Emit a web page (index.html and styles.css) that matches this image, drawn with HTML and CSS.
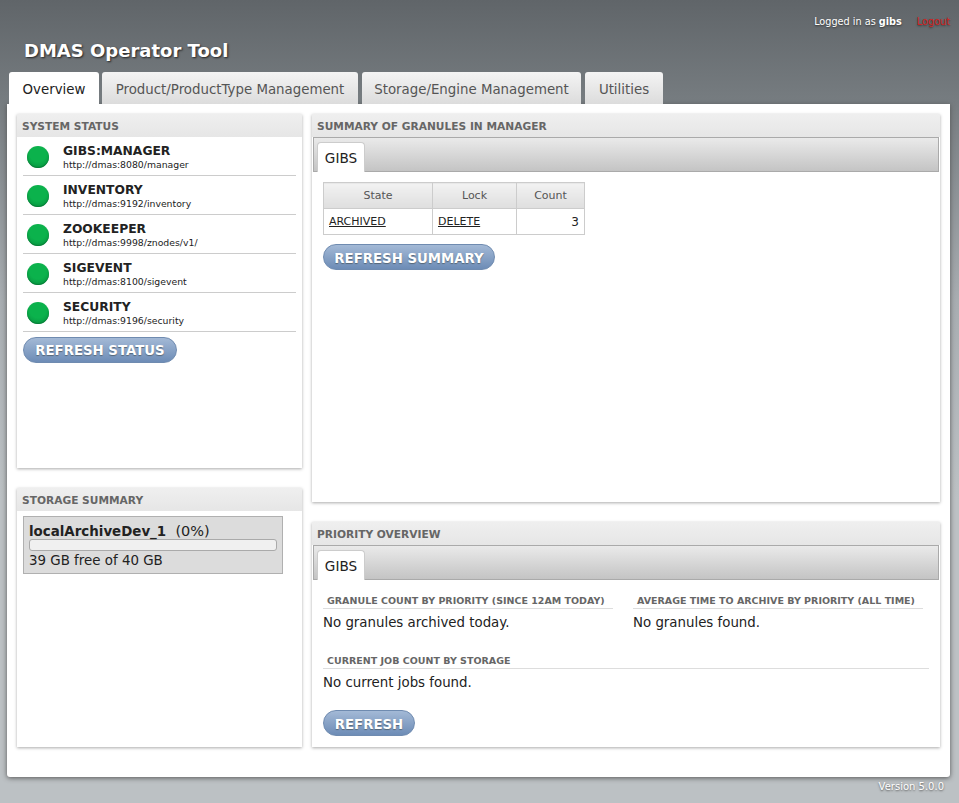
FILE: index.html
```html
<!DOCTYPE html>
<html lang="en">
  <head>
    <meta charset="UTF-8" />
    <title>DMAS Operator Tool</title>
    <link rel="stylesheet" href="styles.css">
  </head>
  <body>
    <div class="top">
      <div class="login">
        Logged in as <b>gibs</b>
        <a href="#" class="logout">Logout</a>
      </div>
      <h1>DMAS Operator Tool</h1>
    </div>

    <ul class="tabs">
      <li class="tab active">Overview</li>
      <li class="tab tab-product">Product/ProductType Management</li>
      <li class="tab tab-storage">Storage/Engine Management</li>
      <li class="tab tab-util">Utilities</li>
    </ul>

    <div class="content">
      <div class="col col-left">
        <div class="panel status-panel">
          <div class="panel-title">SYSTEM STATUS</div>
          <div class="panel-body">
            <div class="status-row">
              <span class="dot"></span>
              <div><div class="svc">GIBS:MANAGER</div><div class="url">http://dmas:8080/manager</div></div>
            </div>
            <div class="status-row">
              <span class="dot"></span>
              <div><div class="svc">INVENTORY</div><div class="url">http://dmas:9192/inventory</div></div>
            </div>
            <div class="status-row">
              <span class="dot"></span>
              <div><div class="svc">ZOOKEEPER</div><div class="url">http://dmas:9998/znodes/v1/</div></div>
            </div>
            <div class="status-row">
              <span class="dot"></span>
              <div><div class="svc">SIGEVENT</div><div class="url">http://dmas:8100/sigevent</div></div>
            </div>
            <div class="status-row">
              <span class="dot"></span>
              <div><div class="svc">SECURITY</div><div class="url">http://dmas:9196/security</div></div>
            </div>
            <button class="btn btn-status">REFRESH STATUS</button>
          </div>
        </div>

        <div class="panel storage-panel">
          <div class="panel-title">STORAGE SUMMARY</div>
          <div class="panel-body storage-body">
            <div class="storage">
              <div class="storage-name"><b>localArchiveDev_1</b> <span class="pct">(0%)</span></div>
              <div class="bar"></div>
              <div>39 GB free of 40 GB</div>
            </div>
          </div>
        </div>
      </div>

      <div class="col col-right">
        <div class="panel summary-panel">
          <div class="panel-title">SUMMARY OF GRANULES IN MANAGER</div>
          <div class="subtabs"><span class="subtab">GIBS</span></div>
          <div class="summary-body">
            <table>
              <tr><th class="c1">State</th><th class="c2">Lock</th><th class="c3">Count</th></tr>
              <tr><td><a href="#">ARCHIVED</a></td><td><a href="#">DELETE</a></td><td class="num">3</td></tr>
            </table>
            <button class="btn btn-summary">REFRESH SUMMARY</button>
          </div>
        </div>

        <div class="panel priority-panel">
          <div class="panel-title">PRIORITY OVERVIEW</div>
          <div class="subtabs"><span class="subtab">GIBS</span></div>
          <div class="priority-body">
            <div class="two">
              <div>
                <h3>GRANULE COUNT BY PRIORITY (SINCE 12AM TODAY)</h3>
                <p>No granules archived today.</p>
              </div>
              <div>
                <h3>AVERAGE TIME TO ARCHIVE BY PRIORITY (ALL TIME)</h3>
                <p>No granules found.</p>
              </div>
            </div>
            <h3 class="jobs">CURRENT JOB COUNT BY STORAGE</h3>
            <p>No current jobs found.</p>
            <button class="btn btn-refresh">REFRESH</button>
          </div>
        </div>
      </div>
    </div>

    <div class="version">Version 5.0.0</div>
  </body>
</html>
```

FILE: styles.css
```css
body {
  font-family: "DejaVu Sans", Verdana, sans-serif;
  background: linear-gradient(#606569 0, #767c80 100px, #a8adb1 300px, #bcc1c4 500px);
  margin: 0;
  padding: 0;
  height: 803px;
  overflow: hidden;
  color: #222;
}

.top {
  height: 72px;
  box-sizing: border-box;
  padding: 16px 9px 0 24px;
}

.login {
  text-align: right;
  font-size: 9.7px;
  line-height: 12px;
  color: #fff;
  text-shadow: 0 1px 2px #333;
}

.logout {
  color: #d42020;
  text-decoration: none;
  margin-left: 12px;
}

h1 {
  margin: 11px 0 0;
  font-size: 18px;
  line-height: 24px;
  color: #fff;
  text-shadow: 1px 1px 2px #222;
}

.tabs {
  display: flex;
  list-style: none;
  margin: 0 0 0 9px;
  padding: 0;
  height: 32px;
}

.tab {
  box-sizing: border-box;
  height: 32px;
  line-height: 35px;
  text-align: center;
  font-size: 13.35px;
  color: #555;
  background: linear-gradient(#f4f4f4, #dcdcdc);
  border-radius: 3px 3px 0 0;
  margin-right: 3px;
  width: 90px;
}

.tab.active {
  background: #fff;
  color: #222;
}

.tab-product { width: 256px; margin-right: 4px; }
.tab-storage { width: 219px; margin-right: 4px; }
.tab-util { width: 78px; }

.content {
  display: flex;
  gap: 10px;
  box-sizing: border-box;
  width: 943px;
  height: 673px;
  margin-left: 7px;
  padding: 10px 10px 30px;
  background: #fff;
  border-radius: 0 0 3px 3px;
  box-shadow: 0 1px 5px #555;
}

.col {
  display: flex;
  flex-direction: column;
  gap: 20px;
}

.col-left { width: 285px; }
.col-right { width: 628px; }

.panel {
  background: #fff;
  box-shadow: 0 1px 3px #aaa;
  display: flex;
  flex-direction: column;
}

.status-panel { height: 354px; }
.storage-panel { height: 259px; }
.summary-panel { height: 388px; }
.priority-panel { height: 225px; }

.panel-title {
  height: 23px;
  box-sizing: border-box;
  padding: 6px 5px 0;
  font-size: 10.65px;
  line-height: 14px;
  font-weight: bold;
  color: #666;
  background: linear-gradient(#efefef, #e6e6e6);
  flex: none;
}

.panel-body {
  padding: 0 6px;
}

.status-row {
  display: flex;
  align-items: center;
  height: 38px;
  border-bottom: 1px solid #ccc;
}

.dot {
  width: 22px;
  height: 22px;
  margin: 2px 14px 0 4px;
  border-radius: 50%;
  background: radial-gradient(circle at 50% 35%, #0bb24c 45%, #068a3c 100%);
  box-shadow: inset 0 -1px 1px #067a35;
  flex: none;
}

.svc {
  padding-top: 2px;
  font-size: 12.3px;
  line-height: 14px;
  font-weight: bold;
  color: #222;
}

.url {
  font-size: 9.3px;
  line-height: 13px;
  color: #222;
}

.btn {
  display: block;
  height: 26px;
  padding: 0;
  border: 1px solid #6f8bb0;
  border-radius: 13px;
  background: linear-gradient(#a3b9d6, #6d8cb6);
  color: #fff;
  font-family: inherit;
  font-size: 13.3px;
  font-weight: bold;
  text-shadow: 0 1px 1px #567;
}

.btn-status { width: 154px; margin-top: 5px; }
.btn-summary { width: 172px; margin-top: 9px; padding-top: 2px; }
.btn-refresh { width: 92px; margin-top: 19px; padding-top: 2px; }

.storage-body { padding-top: 5px; }

.storage {
  width: 260px;
  height: 58px;
  box-sizing: border-box;
  padding: 6px 5px 0;
  background: #dcdcdc;
  border: 1px solid #b0b0b0;
  font-size: 13.4px;
  line-height: 17px;
}

.pct {
  margin-left: 5px;
  font-size: 14.5px;
}

.bar {
  height: 10px;
  margin: -1px 0 1px;
  background: #f0f0f0;
  border: 1px solid #aaa;
  border-radius: 3px;
}

.subtabs {
  height: 35px;
  box-sizing: border-box;
  margin: 0 1px;
  padding: 4px 0 0 3px;
  background: linear-gradient(#eaeaea, #c4c4c4);
  border: 1px solid #aaa;
  flex: none;
}

.subtab {
  display: block;
  box-sizing: border-box;
  width: 48px;
  height: 30px;
  padding-top: 7px;
  text-align: center;
  font-size: 13.6px;
  line-height: 16px;
  background: #fff;
  border: 1px solid #ccc;
  border-bottom: 0;
  border-radius: 4px 4px 0 0;
}

.summary-body {
  padding: 10px 11px;
}

table {
  border-collapse: collapse;
  font-size: 11px;
}

th, td {
  border: 1px solid #ccc;
  height: 25px;
  padding: 0 5px;
  color: #222;
}

th {
  font-weight: normal;
  color: #555;
  background: linear-gradient(#f2f2f2, #dedede);
}

.c1 { width: 98px; }
.c2 { width: 73px; }
.c3 { width: 57px; }

.num {
  text-align: right;
  font-size: 12px;
}

a {
  color: #222;
}

.priority-body {
  padding: 14px 11px;
}

.two {
  display: flex;
  gap: 20px;
}

.two > div {
  width: 290px;
}

h3 {
  margin: 0;
  padding: 0 4px 0 4px;
  font-size: 9.5px;
  line-height: 14px;
  font-weight: bold;
  color: #666;
  border-bottom: 1px solid #ddd;
  white-space: nowrap;
}

p {
  margin: 5px 0 0;
  font-size: 13.35px;
  line-height: 17px;
  color: #222;
}

.jobs {
  margin-top: 23px;
}

.version {
  text-align: right;
  padding: 4px 15px 0 0;
  font-size: 10px;
  line-height: 12px;
  color: #fff;
  text-shadow: 0 1px 2px #555;
}
```
